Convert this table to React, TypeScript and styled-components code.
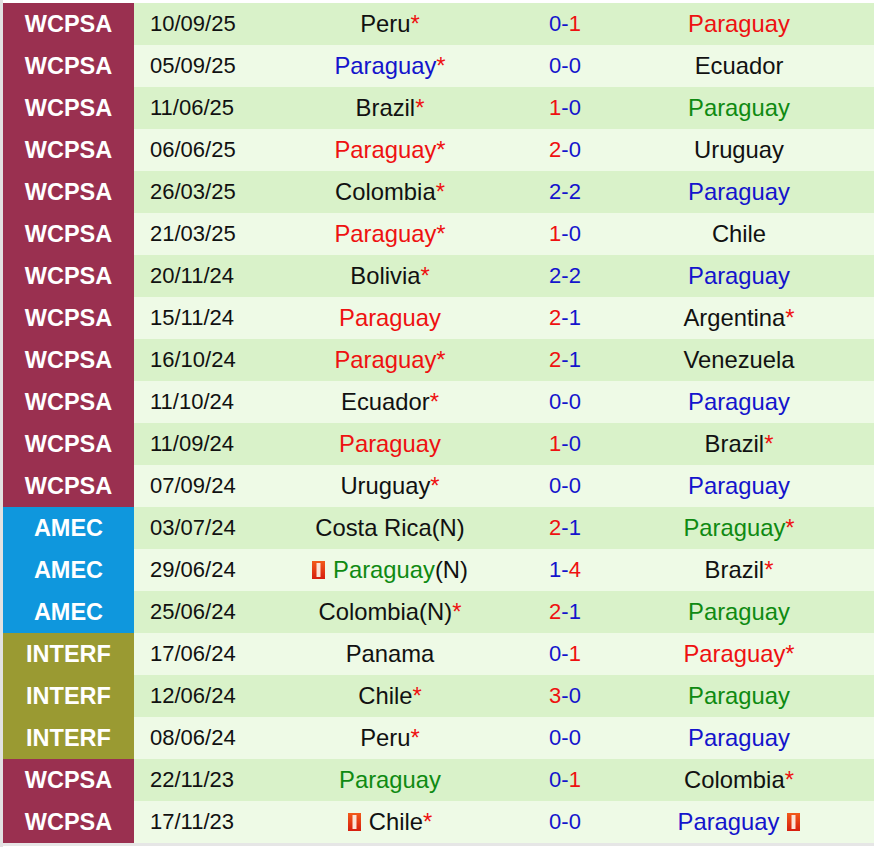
import React from "react";
import styled, { createGlobalStyle } from "styled-components";

const Global = createGlobalStyle`
  html, body { margin: 0; padding: 0; background: #ffffff; }
  body { font-family: "Liberation Sans", Arial, sans-serif; }
`;

type Seg = { t: string; c?: string };
type Team = { segs: Seg[]; cardBefore?: boolean; cardAfter?: boolean };
type Row = {
  comp: "WCPSA" | "AMEC" | "INTERF";
  date: string;
  home: Team;
  score: Seg[];
  away: Team;
};

const RED = "#ee1111";
const BLUE = "#1414cc";
const GREEN = "#0f8a12";
const BLACK = "#111111";

const star: Seg = { t: "*", c: RED };
const nm = (t: string, c = BLACK): Seg => ({ t, c });
const sc = (a: string, b: string): Seg[] => {
  const na = parseInt(a, 10);
  const nb = parseInt(b, 10);
  return [
    { t: a, c: na > nb ? RED : BLUE },
    { t: "-", c: BLUE },
    { t: b, c: nb > na ? RED : BLUE },
  ];
};

const rows: Row[] = [
  { comp: "WCPSA", date: "10/09/25", home: { segs: [nm("Peru"), star] }, score: sc("0", "1"), away: { segs: [nm("Paraguay", RED)] } },
  { comp: "WCPSA", date: "05/09/25", home: { segs: [nm("Paraguay", BLUE), star] }, score: sc("0", "0"), away: { segs: [nm("Ecuador")] } },
  { comp: "WCPSA", date: "11/06/25", home: { segs: [nm("Brazil"), star] }, score: sc("1", "0"), away: { segs: [nm("Paraguay", GREEN)] } },
  { comp: "WCPSA", date: "06/06/25", home: { segs: [nm("Paraguay", RED), star] }, score: sc("2", "0"), away: { segs: [nm("Uruguay")] } },
  { comp: "WCPSA", date: "26/03/25", home: { segs: [nm("Colombia"), star] }, score: sc("2", "2"), away: { segs: [nm("Paraguay", BLUE)] } },
  { comp: "WCPSA", date: "21/03/25", home: { segs: [nm("Paraguay", RED), star] }, score: sc("1", "0"), away: { segs: [nm("Chile")] } },
  { comp: "WCPSA", date: "20/11/24", home: { segs: [nm("Bolivia"), star] }, score: sc("2", "2"), away: { segs: [nm("Paraguay", BLUE)] } },
  { comp: "WCPSA", date: "15/11/24", home: { segs: [nm("Paraguay", RED)] }, score: sc("2", "1"), away: { segs: [nm("Argentina"), star] } },
  { comp: "WCPSA", date: "16/10/24", home: { segs: [nm("Paraguay", RED), star] }, score: sc("2", "1"), away: { segs: [nm("Venezuela")] } },
  { comp: "WCPSA", date: "11/10/24", home: { segs: [nm("Ecuador"), star] }, score: sc("0", "0"), away: { segs: [nm("Paraguay", BLUE)] } },
  { comp: "WCPSA", date: "11/09/24", home: { segs: [nm("Paraguay", RED)] }, score: sc("1", "0"), away: { segs: [nm("Brazil"), star] } },
  { comp: "WCPSA", date: "07/09/24", home: { segs: [nm("Uruguay"), star] }, score: sc("0", "0"), away: { segs: [nm("Paraguay", BLUE)] } },
  { comp: "AMEC", date: "03/07/24", home: { segs: [nm("Costa Rica(N)")] }, score: sc("2", "1"), away: { segs: [nm("Paraguay", GREEN), star] } },
  { comp: "AMEC", date: "29/06/24", home: { segs: [nm("Paraguay", GREEN), nm("(N)")], cardBefore: true }, score: sc("1", "4"), away: { segs: [nm("Brazil"), star] } },
  { comp: "AMEC", date: "25/06/24", home: { segs: [nm("Colombia(N)"), star] }, score: sc("2", "1"), away: { segs: [nm("Paraguay", GREEN)] } },
  { comp: "INTERF", date: "17/06/24", home: { segs: [nm("Panama")] }, score: sc("0", "1"), away: { segs: [nm("Paraguay", RED), star] } },
  { comp: "INTERF", date: "12/06/24", home: { segs: [nm("Chile"), star] }, score: sc("3", "0"), away: { segs: [nm("Paraguay", GREEN)] } },
  { comp: "INTERF", date: "08/06/24", home: { segs: [nm("Peru"), star] }, score: sc("0", "0"), away: { segs: [nm("Paraguay", BLUE)] } },
  { comp: "WCPSA", date: "22/11/23", home: { segs: [nm("Paraguay", GREEN)] }, score: sc("0", "1"), away: { segs: [nm("Colombia"), star] } },
  { comp: "WCPSA", date: "17/11/23", home: { segs: [nm("Chile"), star], cardBefore: true }, score: sc("0", "0"), away: { segs: [nm("Paraguay", BLUE)], cardAfter: true } },
];

const compColor: Record<Row["comp"], string> = {
  WCPSA: "#9a3050",
  AMEC: "#0f97dd",
  INTERF: "#9a9a32",
};

const Frame = styled.div`
  border-left: 3px solid #e2e2e2;
  padding-top: 3px;
  min-height: 847px;
  box-sizing: border-box;
`;

const Table = styled.div`
  display: flex;
  flex-direction: column;
  border-bottom: 3px solid #e6e6e6;
`;

const RowBox = styled.div<{ $odd: boolean }>`
  display: grid;
  grid-template-columns: 131px 120px 272px 78px 1fr;
  height: 42px;
  align-items: stretch;
  background: ${(p) => (p.$odd ? "#d9f2c9" : "#eefae6")};
  font-size: 22px;
  color: ${BLACK};
`;

const Comp = styled.div<{ $bg: string }>`
  background: ${(p) => p.$bg};
  color: #ffffff;
  font-weight: bold;
  display: flex;
  align-items: center;
  justify-content: center;
  font-size: 23.5px;
`;

const DateCell = styled.div`
  display: flex;
  align-items: center;
  padding-left: 16px;
`;

const Center = styled.div<{ $size?: number }>`
  display: flex;
  align-items: center;
  justify-content: center;
  white-space: nowrap;
  font-size: ${(p) => p.$size ?? 22}px;
`;

const CardWrap = styled.span<{ $side: "before" | "after" }>`
  display: inline-flex;
  ${(p) => (p.$side === "before" ? "margin-right: 8px;" : "margin-left: 8px;")}
`;

const RedCard: React.FC<{ side: "before" | "after" }> = ({ side }) => (
  <CardWrap $side={side}>
    <svg width="13" height="18" viewBox="0 0 13 18">
      <defs>
        <linearGradient id="rc" x1="0" y1="0" x2="0" y2="1">
          <stop offset="0" stopColor="#f25a1a" />
          <stop offset="1" stopColor="#d61e0e" />
        </linearGradient>
      </defs>
      <rect x="0" y="0" width="13" height="18" fill="url(#rc)" />
      <rect x="4.5" y="2" width="4" height="14" fill="#fbe4d8" />
    </svg>
  </CardWrap>
);

const Txt = styled.span<{ $c?: string }>`
  color: ${(p) => p.$c || BLACK};
`;

const TeamCell: React.FC<{ team: Team }> = ({ team }) => (
  <Center $size={23.8}>
    {team.cardBefore && <RedCard side="before" />}
    {team.segs.map((s, i) => (
      <Txt key={i} $c={s.c}>
        {s.t}
      </Txt>
    ))}
    {team.cardAfter && <RedCard side="after" />}
  </Center>
);

export default function App() {
  return (
    <>
      <Global />
      <Frame>
        <Table>
          {rows.map((r, i) => (
            <RowBox key={i} $odd={i % 2 === 0}>
              <Comp $bg={compColor[r.comp]}>{r.comp}</Comp>
              <DateCell>{r.date}</DateCell>
              <TeamCell team={r.home} />
              <Center>
                {r.score.map((s, j) => (
                  <Txt key={j} $c={s.c}>
                    {s.t}
                  </Txt>
                ))}
              </Center>
              <TeamCell team={r.away} />
            </RowBox>
          ))}
        </Table>
      </Frame>
    </>
  );
}
